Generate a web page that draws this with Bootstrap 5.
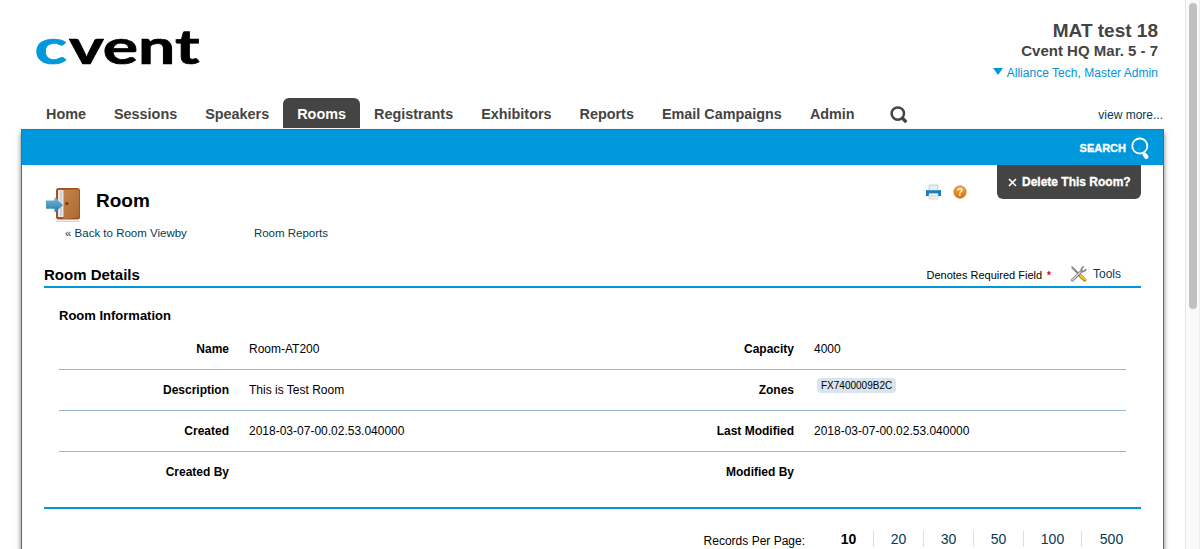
<!DOCTYPE html>
<html lang="en">
<head>
<meta charset="utf-8">
<title>Room Details</title>
<link rel="stylesheet" href="https://cdn.jsdelivr.net/npm/bootstrap@5.3.0/dist/css/bootstrap.min.css">
<style>
body{font-family:"Liberation Sans",Arial,sans-serif;font-size:12px;line-height:16px;color:#000;background:#fff;height:549px;overflow:hidden}
a{color:#053a52;text-decoration:none}
svg{display:block;flex:none}
.site{width:1185px;height:549px;padding-left:21px;overflow:hidden}
.masthead{width:1143px;height:98px}
.logo{margin:10px 0 0 10px}
.account{padding:20px 6px 0 0;color:#444}
.event-name{font-size:19px;line-height:22px}
.event-date{font-size:15px;line-height:18px}
.account a{color:#0092d8;margin-top:5px;letter-spacing:.03px}
.mainnav{width:1143px;height:31px;padding-left:11px}
.mainnav .nav-link{font-size:14.4px;line-height:16px;font-weight:700;color:#444;padding:8px 14px 6px;height:30px;border-radius:6px 6px 0 0}
.mainnav .nav-link.active{background:#444;color:#fff}
.panel{width:1143px;height:440px;border:1px solid #666;border-bottom:0;box-shadow:0 4px 5px #777}
.searchbar{height:35px;background:#0098dd;color:#fff;font-size:11px;padding-right:13px}
.heavy{font-weight:700;-webkit-text-stroke:.35px #fff}
.content{padding:0 22px}
.head{height:99px}
.titlecol{padding-top:20px}
.titlecol h1{font-size:19px;line-height:24px;margin:0 0 0 14px;padding-top:4px;font-weight:700}
.sublinks{font-size:11.5px;margin:2px 0 0 21px}
.delete{width:144px;height:34px;background:#444;border-radius:0 0 6px 6px;color:#fff;padding-left:11px;margin-left:30px}
.section-head{height:24px;border-bottom:2px solid #0098dd}
.section-head h2{font-size:15px;line-height:20px;margin:0;padding-top:1px;font-weight:700}
.req{font-size:11px;margin-top:3px}
.star{font-size:10px;color:#e00000;margin:4px 20px 0 5px}
.info{padding:0 15px;height:221px;border-bottom:2px solid #0098dd}
.info h3{font-size:13px;line-height:16px;margin:0;padding-top:20px;height:41px;font-weight:700}
.line{height:41px;border-bottom:1px solid #95b5d3;padding-top:12px}
.line.last{border:0}
.lab{width:170px;text-align:right;font-weight:700;margin-right:20px}
.half{width:565px}
.tag{background:#d9e4ec;border-radius:4px;font-size:10px;line-height:15px;height:15px;padding:0 4px;margin:-4px 0 0 3px}
.pager{height:40px;padding-top:22px}
.pager a,.pager b{font-size:14px;line-height:16px;width:50px;text-align:center;border-right:1px solid #ddd;height:16px}
.pager .wide{width:58px}
.pager .end{border:0;width:59px}
.gutter{width:15px;height:549px;background:#fafafa;border-left:1px solid #e7e7e7;border-right:1px solid #ededed;padding:3px 0 0 3px}
.thumb{width:8px;height:306px;border-radius:4px;background:#c1c1c1}
</style>
</head>
<body>
<div class="d-flex">
<div class="site">
  <header class="masthead d-flex justify-content-between align-items-start">
    <svg class="logo" width="180" height="66" font-family="Lato,sans-serif" font-weight="700" font-size="47" stroke-width=".7">
      <text x="3.5" y="54.4" textLength="32.5" lengthAdjust="spacingAndGlyphs" fill="#0098dd" stroke="#0098dd">c</text>
      <text x="38" y="54.4" textLength="130.5" lengthAdjust="spacingAndGlyphs" fill="#000" stroke="#000">vent</text>
    </svg>
    <div class="account d-flex flex-column align-items-end">
      <div class="event-name fw-bold">MAT test 18</div>
      <div class="event-date fw-bold">Cvent HQ Mar. 5 - 7</div>
      <a href="#" class="d-flex"><svg class="me-1" width="10" height="14"><path d="M0 3h10L5 10z" fill="#0098dd"/></svg>Alliance Tech, Master Admin</a>
    </div>
  </header>
  <nav class="mainnav d-flex">
    <a class="nav-link" href="#">Home</a><a class="nav-link" href="#">Sessions</a><a class="nav-link" href="#">Speakers</a><a class="nav-link active" href="#">Rooms</a><a class="nav-link" href="#">Registrants</a><a class="nav-link" href="#">Exhibitors</a><a class="nav-link" href="#">Reports</a><a class="nav-link" href="#">Email Campaigns</a><a class="nav-link" href="#">Admin</a>
    <svg width="18" height="18" style="margin:8px 0 0 21px" fill="none" stroke="#444"><circle cx="7.8" cy="7.6" r="6.2" stroke-width="2.5"/><path d="M12 11.8l4.3 4.3" stroke-width="3.4"/></svg>
    <a href="#" class="ms-auto" style="margin:9px 1px 0 0">view more...</a>
  </nav>
  <main class="panel">
    <div class="searchbar d-flex align-items-center justify-content-end gap-1"><span class="heavy">SEARCH</span>
      <svg width="20" height="24" fill="none" stroke="#fff"><circle cx="9.8" cy="10" r="7.5" stroke-width="1.8"/><path d="M13 17l1.6 2" stroke-width="2"/><path d="M14.7 18.7l1.7 2.2" stroke-width="4.2" stroke-linecap="round"/></svg>
    </div>
    <div class="content">
      <div class="head d-flex">
        <div class="titlecol">
          <div class="d-flex align-items-start">
            <svg width="38" height="38" viewBox="0 0 38 38">
              <defs><linearGradient id="wood" x2="1" y2="1"><stop stop-color="#c68448"/><stop offset="1" stop-color="#a96a33"/></linearGradient><linearGradient id="arrow" x2="0" y2="1"><stop stop-color="#73bedc"/><stop offset="1" stop-color="#2878a5"/></linearGradient></defs>
              <path d="M12 36.3h23" stroke="#d3c9c3"/><rect x="12" y="3" width="24" height="31.5" rx="2.5" fill="#a8501c"/><path d="M14 5h7v27h-7z" fill="#e4e6e9"/><path d="M17 6v25" stroke="#b8bcc2"/><path d="M19.5 5L34 4.5q1 0 1 1v25q0 2-2 2.2L19.5 34z" fill="url(#wood)"/><circle cx="22.9" cy="18.5" r="1.5" fill="#742d10"/>
              <path d="M2 15.5h8.5v-3.8l8.5 8.5-8.5 7.2v-3.7H2z" fill="url(#arrow)"/>
            </svg>
            <h1>Room</h1>
          </div>
          <div class="sublinks d-flex"><a href="#">« Back to Room Viewby</a><a href="#" style="margin-left:67px">Room Reports</a></div>
        </div>
        <div class="ms-auto d-flex" style="padding-top:19px;gap:11px">
          <svg width="17" height="17"><path d="M4 1h9v6H4z" fill="#e8edf0" stroke="#bbc5cb" stroke-width=".8"/><path d="M1 6h15v6H1z" fill="#1c7abf"/><path d="M2 6.5h13" stroke="#4597cf"/><path d="M4 9.5h9V15H4z" fill="#f2f3f4" stroke="#c1c9ce" stroke-width=".7"/><path d="M5.5 12h6" stroke="#c8d0d4"/></svg>
          <svg width="14" height="17"><defs><linearGradient id="amber" x2="0" y2="1"><stop stop-color="#f6ac48"/><stop offset="1" stop-color="#d76b0a"/></linearGradient></defs><circle cx="7" cy="8" r="6.2" fill="url(#amber)" stroke="#cf761d" stroke-width=".7"/><text x="7" y="11.7" text-anchor="middle" font-size="10" font-weight="700" fill="#fff">?</text></svg>
        </div>
        <a href="#" class="delete d-flex align-items-center"><svg width="9" height="9" style="margin-right:5px"><path d="M1 1l7 7M8 1L1 8" stroke="#fff" stroke-width="1.7"/></svg><span class="heavy">Delete This Room?</span></a>
      </div>
      <div class="section-head d-flex">
        <h2>Room Details</h2>
        <span class="req ms-auto">Denotes Required Field</span><b class="star">*</b>
        <svg width="18" height="18" style="margin:1px 1px 0 -1px"><path d="M9.8 10.3L14.6 14.8" stroke="#ac8213" stroke-width="3.6" stroke-linecap="round"/><path d="M10.2 10.2l4.5 4" stroke="#f4ca28" stroke-width="2.2" stroke-linecap="round"/><path d="M2 2.5L10 10" stroke="#777" stroke-width="1.8"/><path d="M.8 1.5l1.5-.5L6 4.8 4.8 6z" fill="#999"/><path d="M2.5 15L11.8 6" stroke="#777" stroke-width="3.1" stroke-linecap="round"/><path d="M2.5 14.8L11.8 5.8" stroke="#ccc" stroke-width="1.7" stroke-linecap="round"/><path d="M13.7 1.2L11.4 3.8v2.7h2.6L16.4 4.2" fill="none" stroke="#888" stroke-width="1.7"/></svg>
        <a href="#" style="margin:2px 20px 0 4px">Tools</a>
      </div>
      <div class="info">
        <h3>Room Information</h3>
        <div class="line d-flex"><div class="half d-flex"><span class="lab">Name</span><span>Room-AT200</span></div><span class="lab">Capacity</span><span>4000</span></div>
        <div class="line d-flex"><div class="half d-flex"><span class="lab">Description</span><span>This is Test Room</span></div><span class="lab">Zones</span><span class="tag">FX7400009B2C</span></div>
        <div class="line d-flex"><div class="half d-flex"><span class="lab">Created</span><span>2018-03-07-00.02.53.040000</span></div><span class="lab">Last Modified</span><span>2018-03-07-00.02.53.040000</span></div>
        <div class="line last d-flex"><div class="half d-flex"><span class="lab">Created By</span></div><span class="lab">Modified By</span></div>
      </div>
      <div class="pager d-flex justify-content-end"><span style="margin:2px 19px 0 0">Records Per Page:</span><b>10</b><a href="#">20</a><a href="#">30</a><a href="#">50</a><a href="#" class="wide">100</a><a href="#" class="end">500</a></div>
    </div>
  </main>
</div>
<div class="gutter"><div class="thumb"></div></div>
</div>
<script src="https://cdn.jsdelivr.net/npm/bootstrap@5.3.0/dist/js/bootstrap.bundle.min.js"></script>
</body>
</html>
